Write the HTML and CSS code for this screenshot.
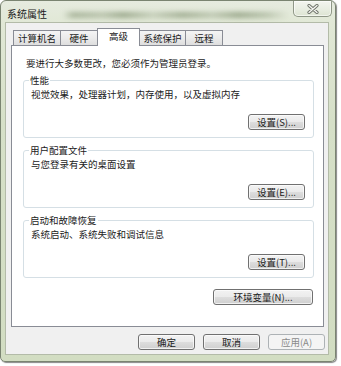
FILE: index.html
```html
<!DOCTYPE html>
<html lang="zh-CN">
<head>
<meta charset="utf-8">
<title>系统属性</title>
<link rel="stylesheet" href="styles.css">
</head>
<body>
<div class="window">
  <div class="titlebar">
    <div class="glass"></div>
    <span class="title">系统属性</span>
    <div class="close">
      <svg width="12" height="10" viewBox="0 0 12 10">
        <path d="M2 1.5 L10 8.5 M10 1.5 L2 8.5" stroke="#6d7268" stroke-width="3.2" stroke-linecap="round" fill="none"/>
        <path d="M2 1.5 L10 8.5 M10 1.5 L2 8.5" stroke="#f4f4f0" stroke-width="1.4" stroke-linecap="round" fill="none"/>
      </svg>
    </div>
  </div>
  <div class="client">
    <div class="tabs">
      <div class="tab w1">计算机名</div>
      <div class="tab w2">硬件</div>
      <div class="tab sel w3">高级</div>
      <div class="tab w4">系统保护</div>
      <div class="tab w5">远程</div>
    </div>
    <div class="panel">
      <p class="intro">要进行大多数更改，您必须作为管理员登录。</p>
      <div class="group">
        <div class="legend">性能</div>
        <div class="desc">视觉效果，处理器计划，内存使用，以及虚拟内存</div>
        <div class="brow"><button class="btn">设置(S)...</button></div>
      </div>
      <div class="group">
        <div class="legend">用户配置文件</div>
        <div class="desc">与您登录有关的桌面设置</div>
        <div class="brow"><button class="btn">设置(E)...</button></div>
      </div>
      <div class="group">
        <div class="legend">启动和故障恢复</div>
        <div class="desc">系统启动、系统失败和调试信息</div>
        <div class="brow"><button class="btn">设置(T)...</button></div>
      </div>
      <div class="envrow"><button class="btn env">环境变量(N)...</button></div>
    </div>
    <div class="footer">
      <button class="btn">确定</button>
      <button class="btn">取消</button>
      <button class="btn disabled" disabled>应用(A)</button>
    </div>
  </div>
</div>
</body>
</html>
```

FILE: styles.css
```css
* { box-sizing: border-box; }
html, body { margin: 0; padding: 0; background: #ffffff; }
body {
  width: 341px;
  height: 366px;
  overflow: hidden;
  font-family: "Noto Sans CJK SC", "Liberation Sans", sans-serif;
  font-size: 9.5px;
  color: #1a1a1a;
}
.window {
  width: 336px;
  height: 362px;
  border: 1px solid #7a8471;
  border-radius: 6px 6px 5px 5px;
  background: linear-gradient(180deg, #e6ebdf 0px, #e1e8d6 22px, #d6e0c8 120px, #d2ddc2 100%);
  box-shadow: 1px 1px 1px rgba(40, 40, 40, 0.55);
  display: flex;
  flex-direction: column;
  position: relative;
  overflow: hidden;
}
.titlebar {
  height: 21px;
  display: flex;
  align-items: flex-start;
  position: relative;
  flex: none;
}
.glass {
  position: absolute;
  left: 62px;
  top: 11px;
  width: 226px;
  height: 6px;
  background: linear-gradient(90deg,
    rgba(110,128,92,0.0) 0px, rgba(110,128,92,0.5) 10px, rgba(110,128,92,0.35) 40px,
    rgba(110,128,92,0.6) 60px, rgba(110,128,92,0.25) 90px, rgba(110,128,92,0.55) 120px,
    rgba(110,128,92,0.3) 150px, rgba(110,128,92,0.6) 175px, rgba(110,128,92,0.35) 205px,
    rgba(110,128,92,0.0) 226px);
  filter: blur(2.5px);
}
.title {
  position: relative;
  margin: 6px 0 0 6px;
  font-size: 10px;
  line-height: 13px;
  color: #1a1a1a;
}
.close {
  position: relative;
  margin-left: auto;
  margin-right: 3px;
  width: 39px;
  height: 16px;
  border: 1px solid #8f9787;
  border-top: none;
  border-radius: 0 0 5px 5px;
  background: linear-gradient(180deg, #f3f5ef 0%, #e8ede1 55%, #dde4d2 100%);
  box-shadow: inset 0 0 0 1px rgba(255, 255, 255, 0.6);
  display: flex;
  align-items: center;
  justify-content: center;
}
.client {
  margin-left: 4px;
  width: 324px;
  height: 333px;
  background: #f0f0f0;
  border: 1px solid #b3bba8;
  display: flex;
  flex-direction: column;
  flex: none;
}
.tabs {
  display: flex;
  align-items: flex-end;
  height: 23px;
  padding-left: 7px;
  flex: none;
}
.tab {
  height: 15px;
  margin-bottom: 1px;
  margin-left: -1px;
  border: 1px solid #898c95;
  border-bottom: none;
  background: linear-gradient(180deg, #f4f4f4 0%, #ebebeb 50%, #dedede 100%);
  text-align: center;
  line-height: 14px;
  white-space: nowrap;
}
.tab.w1 { width: 48px; margin-left: 0; }
.tab.w2 { width: 38px; }
.tab.w3 { width: 43px; }
.tab.w4 { width: 47px; }
.tab.w5 { width: 38px; }
.tab.sel {
  height: 18px;
  margin-bottom: 0;
  background: #ffffff;
  position: relative;
  z-index: 1;
  line-height: 15px;
}
.panel {
  margin: -1px 0 0 5px;
  width: 313px;
  height: 282px;
  background: #ffffff;
  border: 1px solid #898c95;
  padding: 11px 9px 0 11px;
  flex: none;
}
.intro {
  margin: 0 0 0 3px;
  line-height: 12px;
}
.group {
  margin-top: 11px;
  height: 58px;
  border: 1px solid #d5dfe5;
  border-radius: 3px;
  padding: 0 8px 0 7px;
}
.group + .group { margin-top: 12px; }
.legend {
  width: fit-content;
  margin: -7px 0 0 -2px;
  padding: 0 1px;
  background: #ffffff;
  line-height: 12px;
}
.desc {
  margin-top: 2px;
  line-height: 12px;
}
.brow {
  display: flex;
  justify-content: flex-end;
  margin-top: 14px;
}
.btn {
  width: 57px;
  height: 16px;
  padding: 0;
  border: 1px solid #707070;
  border-radius: 3px;
  background: linear-gradient(180deg, #f2f2f2 0%, #ebebeb 48%, #dddddd 52%, #cfcfcf 100%);
  box-shadow: inset 0 0 0 1px rgba(252, 252, 252, 0.75);
  font-family: inherit;
  font-size: 9.5px;
  line-height: 14px;
  color: #1a1a1a;
  white-space: nowrap;
}
.envrow {
  display: flex;
  justify-content: flex-end;
  margin-top: 11px;
  padding-right: 1px;
}
.btn.env { width: 100px; }
.footer {
  display: flex;
  justify-content: flex-end;
  gap: 8px;
  margin-top: 7px;
  padding-right: 3px;
}
.btn.disabled {
  border-color: #adb2b5;
  background: #f4f4f4;
  box-shadow: none;
  color: #8a8a8a;
}
```
